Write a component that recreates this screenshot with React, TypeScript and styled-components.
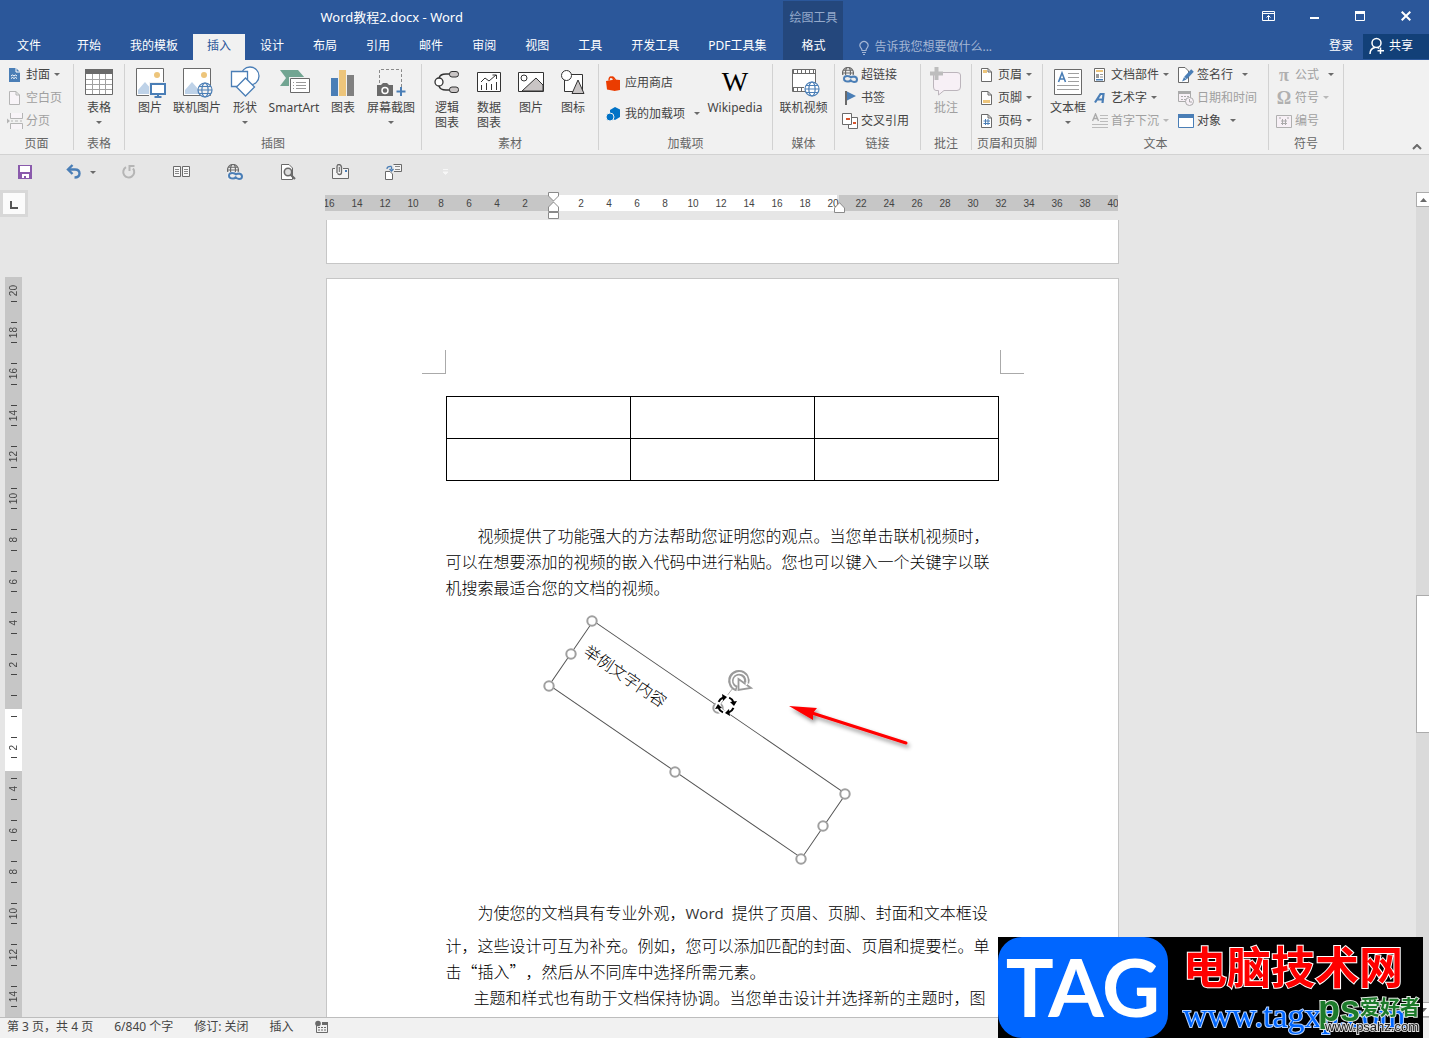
import React from 'react';
import styled, { createGlobalStyle, css } from 'styled-components';

const ui = '"Noto Sans", "Noto Sans CJK SC", sans-serif';
const cjk = '"Noto Sans CJK SC", "Noto Sans", sans-serif';
const BLUE = '#2b579a';
const ACCENT = '#4a7eb6';
const INK = '#6a6a6a';
const LINE = '#d2d2d2';

const GlobalStyle = createGlobalStyle`
  *, *::before, *::after { box-sizing: border-box; }
  body { margin: 0; font-family: ${ui}; font-size: 12px; color: #444; background: #e6e6e6; }
  button, input { font: inherit; color: inherit; background: none; border: 0; padding: 0; margin: 0; }
  svg { display: block; flex: none; }
`;

const Shell = styled.div`
  height: 100vh;
  display: flex;
  flex-direction: column;
  overflow: hidden;
`;

/* ---------- header ---------- */
const Header = styled.header`
  flex: none;
  display: flex;
  height: 60px;
  background: ${BLUE};
  color: #fff;
`;
const HeaderMain = styled.div`
  display: flex;
  flex-direction: column;
`;
const Title = styled.h1`
  margin: 0;
  height: 34px;
  font-size: 13px;
  line-height: 34px;
  font-weight: 400;
  text-align: center;
`;
const Tabs = styled.nav`
  display: flex;
  gap: 1px;
  padding: 0 3px 0 0;
`;
const Tab = styled.button<{ $active?: boolean }>`
  height: 26px;
  padding: 0 14px 2px;
  line-height: 22px;
  white-space: nowrap;
  &:first-child { padding: 0 17px 2px; margin-right: 4px; }
  ${p => p.$active && css`
    background: #f1f1f1;
    color: ${BLUE};
  `}
`;
const ContextGroup = styled.div`
  width: 60px;
  margin-top: 1px;
  background: #24477c;
  display: flex;
  flex-direction: column;
  align-items: center;
`;
const ContextName = styled.span`
  line-height: 33px;
  color: #94a9cb;
`;
const HeaderSide = styled.div`
  flex: 1;
  display: flex;
  flex-direction: column;
`;
const WindowControls = styled.div`
  display: flex;
  justify-content: flex-end;
  height: 34px;
  padding-bottom: 2px;
`;
const WindowButton = styled.button`
  width: 46px;
  display: grid;
  place-items: center;
`;
const SideRow = styled.div`
  display: flex;
  align-items: stretch;
  height: 26px;
  padding-left: 15px;
`;
const TellMe = styled.label`
  flex: 1;
  display: flex;
  align-items: center;
  gap: 4px;
  color: #a4b6d4;
`;
const TellInput = styled.input`
  flex: 1;
  min-width: 0;
  outline: none;
  line-height: 18px;
  &::placeholder { color: #a4b6d4; opacity: 1; }
`;
const SignIn = styled.button`
  padding: 0 10px 2px;
  line-height: 22px;
`;
const Share = styled.button`
  width: 66px;
  height: 25px;
  padding: 0 0 2px 6px;
  background: #124078;
  display: flex;
  align-items: center;
  gap: 4px;
  line-height: 20px;
`;

/* ---------- ribbon ---------- */
const Ribbon = styled.section`
  flex: none;
  display: flex;
  height: 95px;
  padding: 4px 0;
  background: #f1f1f1;
  border-bottom: 1px solid ${LINE};
`;
const Group = styled.div<{ $w: number }>`
  flex: none;
  width: ${p => p.$w}px;
  border-right: 1px solid ${LINE};
  display: flex;
  flex-direction: column;
`;
const GroupBody = styled.div<{ $pad?: number; $center?: boolean }>`
  flex: none;
  height: 71px;
  display: flex;
  padding-left: ${p => p.$pad ?? 0}px;
  justify-content: ${p => (p.$center ? 'center' : 'flex-start')};
`;
const GroupName = styled.div`
  text-align: center;
  line-height: 18px;
  color: #666;
  white-space: nowrap;
`;
const BigButton = styled.button<{ $w: number; $off?: boolean }>`
  width: ${p => p.$w}px;
  display: flex;
  flex-direction: column;
  align-items: center;
  justify-content: flex-start;
  line-height: 15px;
  white-space: pre;
  color: ${p => (p.$off ? '#a0a0a0' : '#444')};
`;
const BigIcon = styled.span`
  height: 36px;
  display: grid;
  place-items: center;
`;
const Caret = styled.i<{ $gap?: number; $off?: boolean }>`
  width: 0;
  height: 0;
  margin-left: ${p => p.$gap ?? 0}px;
  border: 3px solid transparent;
  border-top-color: ${p => (p.$off ? '#b8b8b8' : '#6a6a6a')};
  border-bottom: 0;
`;
const BigCaret = styled(Caret)`
  margin-top: 6px;
`;
const Stack = styled.div<{ $w?: number; $loose?: boolean }>`
  display: flex;
  flex-direction: column;
  width: ${p => (p.$w ? `${p.$w}px` : 'auto')};
  padding-top: ${p => (p.$loose ? 8 : 0)}px;
  gap: ${p => (p.$loose ? 10 : 2)}px;
`;
const SmallButton = styled.button<{ $off?: boolean }>`
  height: 21px;
  display: flex;
  align-items: center;
  white-space: nowrap;
  color: ${p => (p.$off ? '#a0a0a0' : '#444')};
`;
const SmallLabel = styled.span`
  margin-left: 3px;
  line-height: 18px;
`;
const Collapse = styled.button`
  margin-left: auto;
  align-self: flex-end;
  padding: 0 7px 0 0;
`;

/* ---------- quick access ---------- */
const QuickBar = styled.div`
  flex: none;
  display: flex;
  height: 35px;
`;
const QuickButton = styled.button<{ $w?: number; $menu?: boolean }>`
  width: ${p => p.$w ?? 53}px;
  display: flex;
  align-items: center;
  justify-content: ${p => (p.$menu ? 'flex-end' : 'center')};
  padding: 0 ${p => (p.$menu ? 6 : 0)}px 1px 0;
`;

/* ---------- workspace ---------- */
const Workspace = styled.div`
  flex: 1;
  min-height: 0;
  display: flex;
`;
const LeftRail = styled.div`
  width: 28px;
  display: flex;
  flex-direction: column;
`;
const TabStop = styled.button`
  height: 27px;
  border: 3px solid #d8d8d8;
  background: #fbfbfb;
  display: grid;
  place-items: center;
`;
const VRuler = styled.div`
  flex: 1;
  min-height: 0;
  width: 17px;
  margin: 60px 0 0 5px;
  overflow: hidden;
  display: flex;
  flex-direction: column;
  justify-content: flex-end;
  background: linear-gradient(#c6c6c6 432px, #fff 432px 494px, #c6c6c6 494px);
`;
const VCell = styled.div`
  flex: none;
  height: 41px;
  padding: 10px 0;
  display: flex;
  flex-direction: column;
  align-items: center;
  justify-content: space-between;
  &:nth-child(odd) { height: 42px; }
  &::before, &::after { content: ''; width: 6px; height: 1px; background: #444; }
  &:first-child::before { background: none; }
`;
const VNumber = styled.span`
  writing-mode: vertical-rl;
  transform: rotate(180deg);
  font: 10px/12px "Liberation Sans", sans-serif;
`;
const Canvas = styled.main`
  flex: 1;
  min-width: 0;
  display: flex;
  flex-direction: column;
  align-items: center;
`;
const HRuler = styled.div`
  position: relative;
  flex: none;
  width: 793px;
  height: 30px;
  padding-top: 5px;
`;
const HTrack = styled.div`
  height: 16px;
  margin: 0 1px 0 -1px;
  overflow: hidden;
  display: flex;
  justify-content: center;
  background: linear-gradient(to right, #c6c6c6 229px, #fff 229px 512px, #e0e0e0 512px 514px, #c6c6c6 514px);
  font: 10px/18px "Liberation Sans", sans-serif;
`;
const HCell = styled.span`
  flex: none;
  width: 28px;
  text-align: center;
`;
const Marker = styled.svg<{ $x: number; $y: number }>`
  position: absolute;
  left: ${p => p.$x}px;
  top: ${p => p.$y}px;
`;
const Pages = styled.div`
  flex: 1;
  min-height: 0;
  width: 793px;
  overflow: hidden;
`;
const PageEnd = styled.div`
  height: 44px;
  background: #fff;
  border: 1px solid #c6c6c6;
  border-top: 0;
  margin-bottom: 14px;
`;
const Page = styled.article`
  background: #fff;
  border: 1px solid #c6c6c6;
  padding: 71px 119px 40px;
  color: #000;
`;
const Crops = styled.div`
  display: flex;
  justify-content: space-between;
  margin: 0 -25px 22px -24px;
`;
const Crop = styled.i<{ $side: 'left' | 'right' }>`
  width: 24px;
  height: 24px;
  border-bottom: 1px solid #aaa;
  border-${p => (p.$side === 'left' ? 'right' : 'left')}: 1px solid #aaa;
`;
const DocTable = styled.table`
  width: 100%;
  table-layout: fixed;
  border-collapse: collapse;
  margin-bottom: 41px;
  td { height: 42px; border: 1px solid #000; padding: 0; }
`;
const Para = styled.p`
  margin: 0;
  font: 300 16px/26px ${cjk};
  white-space: pre;
  text-spacing-trim: space-all;
`;
const TextLine = styled.span<{ $indent?: number; $tall?: boolean }>`
  display: block;
  padding-left: ${p => p.$indent ?? 0}px;
  line-height: ${p => (p.$tall ? 40 : 26)}px;
`;
const Latin = styled.span`
  margin-right: 8px;
  font: 15px/20px "Open Sans", sans-serif;
  color: #333;
`;
const Figure = styled.figure`
  position: relative;
  height: 292px;
  margin: 0;
`;
const TextBox = styled.div`
  position: absolute;
  left: 98px;
  top: 100px;
  width: 307px;
  height: 79px;
  padding: 14px 9px;
  border: 1px solid #555;
  transform: rotate(34.4deg);
  font: 300 16px/24px ${cjk};
`;
const Overlay = styled.svg`
  position: absolute;
  left: 0;
  top: 0;
`;

/* ---------- scroll bar ---------- */
const ScrollBar = styled.div`
  width: 13px;
  margin-top: 2px;
  display: flex;
  flex-direction: column;
  background: #dadada;
`;
const ScrollButton = styled.button`
  height: 15px;
  background: #fff;
  border: 1px solid #ababab;
  border-right: 0;
  display: grid;
  place-items: center end;
  padding-right: 2px;
`;
const ScrollGap = styled.div<{ $grow: number }>`
  flex: ${p => p.$grow} 1 0;
`;
const Thumb = styled.div`
  flex: 137 1 0;
  background: #fff;
  border: 1px solid #ababab;
  border-right: 0;
`;

/* ---------- status ---------- */
const Status = styled.footer`
  flex: none;
  height: 21px;
  display: flex;
  align-items: center;
  gap: 21px;
  padding: 0 0 2px 7px;
  border-top: 1px solid #bdbdbd;
  background: #f1f1f1;
  line-height: 18px;
  color: #444;
`;

/* ---------- site banner ---------- */
const Banner = styled.aside`
  position: fixed;
  right: 6px;
  bottom: 0;
  width: 425px;
  height: 101px;
  display: flex;
  background: #000;
`;
const Tag = styled.strong`
  width: 170px;
  border-radius: 24px;
  background: #0066ff;
  color: #fff;
  font: 700 80px/98px Lato, "Open Sans", sans-serif;
  text-align: center;
`;
const BannerText = styled.div`
  flex: 1;
  padding-left: 15px;
  white-space: nowrap;
`;
const BannerName = styled.div`
  font: 700 44px/56px ${cjk};
  color: #f00;
  -webkit-text-stroke: 2px #fff;
  paint-order: stroke fill;
`;
const BannerUrl = styled.div`
  font: 34px/46px "Liberation Serif", serif;
  color: #0066ff;
  -webkit-text-stroke: 2px #b5d3ff;
  paint-order: stroke fill;
`;
const Stamp = styled.div`
  position: absolute;
  right: 4px;
  bottom: 4px;
  width: 101px;
  height: 36px;
  white-space: nowrap;
`;
const StampName = styled.div`
  display: flex;
  align-items: flex-start;
  color: #1c7a2a;
  -webkit-text-stroke: 2px #dfe8df;
  paint-order: stroke fill;
  font: 700 20px/18px ${cjk};
`;
const StampPs = styled.span`
  font: 700 36px/22px "Liberation Sans", sans-serif;
`;
const StampUrl = styled.div`
  position: absolute;
  right: 0;
  bottom: 0;
  font: 13px/14px "Liberation Sans", sans-serif;
  color: #222;
  -webkit-text-stroke: 2px #ddd;
  paint-order: stroke fill;
`;

/* ---------- icons ---------- */
type IconProps = { w?: number; h?: number; children: React.ReactNode };
const Ico = ({ w = 16, h = 16, children }: IconProps) => (
  <svg width={w} height={h} viewBox={`0 0 ${w} ${h}`} fill="none" aria-hidden="true">{children}</svg>
);
const Globe = ({ x, y, r, c = ACCENT, bg = '#f1f1f1' }: { x: number; y: number; r: number; c?: string; bg?: string }) => (
  <g transform={`translate(${x} ${y})`} stroke={c} strokeWidth="1.2">
    <circle r={r} fill={bg} />
    <ellipse rx={r * 0.45} ry={r} />
    <path d={`M${-r} 0H${r}M${-r * 0.85} ${-r / 2}H${r * 0.85}M${-r * 0.85} ${r / 2}H${r * 0.85}`} />
  </g>
);
const HyperIcon = () => (
  <Ico>
    <Globe x={6} y={6} r={5.5} c={INK} />
    <path d="M0 8H16V16H0Z" fill="#ececec" />
    <path d="M9 13.500Q8 14.500 6 14.500Q2 14.500 2 11.700T5.500 9Q8 9 9.500 11M8 12.500Q9.500 15 12 15Q15 15 15 12.500T12 9.500Q10 9.500 9 10.500" stroke={ACCENT} strokeWidth="2" />
  </Ico>
);
const Cover = () => (
  <Ico><path d="M2 1H9L13 5V15H2Z" fill={ACCENT} /><path d="M9 1V5H13" stroke="#fff" /><path d="M4 9l1.500-1 1.500 1 1.500-1 1.500 1M4 11.500l1.500-1 1.500 1 1.500-1 1.500 1" stroke="#fff" /></Ico>
);
const Blank = () => (
  <Ico><path d="M2.500 1.500H9L12.500 5V14.500H2.500ZM9 1.500V5H12.500" stroke="#b5b5b5" fill="#f8f4f8" /></Ico>
);
const Break = () => (
  <Ico><path d="M3.500 0V5.500H15.500V0M3.500 16V10.500H15.500V16" stroke="#b5b5b5" fill="#f8f4f8" /><path d="M0 5.500L3 8L0 10.500ZM4 7.500H6V8.500H4ZM8 7.500H11V8.500H8ZM13 7.500H15V8.500H13Z" fill="#b5b5b5" /></Ico>
);
const TableIcon = () => (
  <Ico w={28} h={26}><path d="M.5.500H27.500V25.500H.5Z" fill="#fff" stroke={INK} /><path d="M0 0H28V5H0Z" fill={INK} /><path d="M1 10.500H27M1 15.500H27M1 20.500H27M7.500 5V25M14.500 5V25M20.500 5V25" stroke="#a0a0a0" /></Ico>
);
const Photo = ({ online }: { online?: boolean }) => (
  <Ico w={32} h={32}>
    <path d="M2.500 2.500H29.500V29.500H2.500Z" fill="#fff" stroke={INK} />
    <circle cx="23" cy="9" r="3" fill="#edc57b" />
    <path d="M4 28V24L11 16L18 24V28Z" fill="#bed2e8" />
    {online ? <Globe x={24} y={24} r={7} /> : (
      <><path d="M15 16H32V30H15Z" fill="#f1f1f1" /><path d="M17 18H31V28H17Z" fill="#fff" stroke={ACCENT} strokeWidth="2" /><path d="M24 28V31M20.500 31H27.500" stroke={ACCENT} strokeWidth="2" /></>
    )}
  </Ico>
);
const Shapes = () => (
  <Ico w={32} h={32}><g stroke={ACCENT} strokeWidth="1.300" fill="#fff"><circle cx="21" cy="10" r="9" /><path d="M2.500 5.500H18.500V20.500H2.500Z" /><path d="M16.500 12L25.500 21L16.500 30L7.500 21Z" /></g></Ico>
);
const SmartArt = () => (
  <Ico w={32} h={32}><path d="M2 4H20L27 12L21 20H2L8 12Z" fill="#72a592" /><path d="M11 11H32V28H11Z" fill="#f1f1f1" /><path d="M12.500 12.500H31.500V26.500H12.500Z" fill="#fff" stroke={INK} /><path d="M18 16.500H28M18 19.500H28M18 22.500H28M15 16.500H16M15 19.500H16M15 22.500H16" stroke="#999" /></Ico>
);
const Chart = () => (
  <Ico w={26} h={28}><path d="M1 10H8V28H1Z" fill={ACCENT} /><path d="M9 2H16V28H9Z" fill="#edc57b" /><path d="M17 7H24V28H17Z" fill="#808080" /></Ico>
);
const Screenshot = () => (
  <Ico w={32} h={30}><path d="M4.500 16V2.500H26.500V20" stroke="#8a8a8a" strokeDasharray="3 2" /><path d="M2 18H6L8 16H12L14 18H18V29H2Z" fill={INK} /><circle cx="10" cy="23.500" r="3" stroke="#fff" strokeWidth="1.500" /><path d="M26 20V29M21.500 24.500H30.500" stroke={ACCENT} strokeWidth="2" /></Ico>
);
const Logic = () => (
  <Ico w={28} h={26}><path d="M17 5H13Q7 5 6 9M17 21H13Q7 21 6 17" stroke="#333" strokeWidth="1.300" /><circle cx="6" cy="13" r="4" fill="#fff" stroke="#333" strokeWidth="1.300" /><rect x="16.500" y="2.500" width="9" height="5.500" rx="2.500" fill="#c9c5c5" stroke="#333" /><rect x="16.500" y="18" width="9" height="5.500" rx="2.500" fill="#c9c5c5" stroke="#333" /></Ico>
);
const DataChart = () => (
  <Ico w={26} h={24}><path d="M1.500 2.500H24.500V21.500H1.500Z" fill="#fff" stroke="#333" /><path d="M5.500 20V15M10.500 20V13M15.500 20V14M20.500 20V12M5 12L9 8L13 11L20 5M16.500 5H20.500V9" stroke="#333" /></Ico>
);
const Landscape = () => (
  <Ico w={28} h={24}><path d="M1.500 2.500H26.500V21.500H1.500Z" stroke="#333" fill="#fff" /><path d="M5 21L19 8L26 15V21Z" fill="#c9c5c5" stroke="#333" /><circle cx="7" cy="8" r="3" fill="#fff" stroke="#333" /></Ico>
);
const Glyphs = () => (
  <Ico w={26} h={26}><path d="M4.500 5.500H22.500V22.500H4.500Z" fill="#fff" stroke="#333" /><circle cx="6.500" cy="6.500" r="5" fill="#fff" stroke="#333" /><path d="M18 11L24 24.500H12Z" fill="#c9c5c5" stroke="#333" /></Ico>
);
const Store = () => (
  <Ico><path d="M0 6L9 4.500V16L1 14.500ZM8.500 4.500L14 5V15L8.500 16Z" fill="#eb3c00" /><path d="M3 5.500Q3 2 5 2T7.500 5M5 3Q7 0 9.500 5" stroke="#eb3c00" strokeWidth="1.300" /></Ico>
);
const AddIn = () => (
  <Ico><path d="M9 1L14 3.500V11L9 14L4 12V4Z" fill="#0072c6" /><circle cx="4" cy="11" r="4" fill="#0072c6" stroke="#f1f1f1" /></Ico>
);
const Wiki = styled.span`
  font: 28px/28px "Liberation Serif", serif;
  color: #000;
`;
const Video = () => (
  <Ico w={32} h={30}><path d="M4.500 2.500H27.500V24.500H4.500Z" fill="#fff" stroke={INK} /><path d="M5 4.500H27M5 22.500H16" stroke={INK} strokeWidth="3" strokeDasharray="1 3" /><path d="M5 6.500H27M5 20.500H16" stroke={INK} /><Globe x={24} y={22} r={7} bg="#fff" /></Ico>
);
const Flag = () => (
  <Ico><path d="M4 1V15" stroke={INK} strokeWidth="2" /><path d="M5 1.500L14 6L5 10.500Z" fill={ACCENT} /></Ico>
);
const CrossRef = () => (
  <Ico><path d="M6.500 4.500H15.500V15.500H6.500Z" fill="#fff" stroke={INK} /><path d="M.5.500H9.500V11.500H.5Z" fill="#fff" stroke={INK} /><path d="M4 5H8V7H4ZM11 9H14V11H11Z" fill="#d8532b" /></Ico>
);
const Comment = () => (
  <Ico w={32} h={30}><path d="M5 5.500H27Q30.500 5.500 30.500 8V20Q30.500 23.500 27 23.500H14L8.500 28V23.500H6Q3.500 23.500 3.500 20V8Z" fill="#f7f0f6" stroke="#bcb5bc" /><path d="M6.500 0V13M0 6.500H13" stroke="#bdbdbd" strokeWidth="4" /></Ico>
);
const SheetIcon = ({ part }: { part: 'top' | 'bottom' | 'hash' }) => (
  <Ico><path d="M2.500 1.500H9L12.500 5V14.500H2.500ZM9 1.500V5H12.500" stroke={INK} fill="#fff" />
    {part === 'top' && <path d="M4 3H8V6H4Z" fill="#edc57b" />}
    {part === 'bottom' && <path d="M4 10H11V13H4Z" fill="#edc57b" />}
    {part === 'hash' && <path d="M6.500 6V12M9 6V12M4.500 8H11M4.500 10.500H11" stroke={ACCENT} />}
  </Ico>
);
const TextBoxIcon = () => (
  <Ico w={28} h={26}><path d="M.5.500H27.500V25.500H.5Z" fill="#fff" stroke={INK} /><path d="M14 4.500H25M14 8.500H25M14 12.500H25M3 16.500H25M3 20.500H25" stroke="#a0a0a0" /><path d="M4.500 13L8 4L11.500 13M5.500 10H10.500" stroke={ACCENT} strokeWidth="1.600" /></Ico>
);
const Parts = () => (
  <Ico><path d="M2.500 1.500H12.500V14.500H2.500Z" fill="#fff" stroke={INK} /><path d="M4 3H11V5H4Z" fill="#edc57b" /><path d="M4 7H7V11H4Z" fill="#999" /><path d="M8 7.500H11M8 10H11" stroke="#999" /><path d="M4 12H11V13.500H4Z" fill={ACCENT} /></Ico>
);
const ArtText = () => (
  <Ico><path d="M3 12.500L8.500 4H11.500L10.500 13M5.500 9.500H10.500" stroke={ACCENT} strokeWidth="2.200" /></Ico>
);
const DropCap = () => (
  <Ico><path d="M.5 8L3.500 1L6.500 8M1.500 5.500H5.500" stroke="#aaa" strokeWidth="1.400" /><path d="M8 2.500H16M8 5.500H16M8 8.500H16M0 11.500H16M0 14.500H16" stroke="#bbb" /></Ico>
);
const Sign = () => (
  <Ico><path d="M.5.500H7L10.500 4V15.500H.5Z" fill="#fff" stroke={INK} /><path d="M14.500 3.500L7.500 11" stroke={ACCENT} strokeWidth="3.500" /><path d="M4 14.500L6 10L8.500 12.500Z" fill={ACCENT} /></Ico>
);
const DateIcon = () => (
  <Ico><path d="M.5 1.500H12.500V11.500H.5Z" fill="#f7f0f6" stroke="#aaa" /><path d="M0 1H13V4H0Z" fill="#aaa" /><path d="M3 6.500H11M3 9.500H8" stroke="#aaa" strokeDasharray="2 1" /><circle cx="11.500" cy="11.500" r="4" fill="#f7f0f6" stroke="#aaa" /><path d="M11.500 9V12H14" stroke="#aaa" /></Ico>
);
const ObjectIcon = () => (
  <Ico><path d="M.5 1.500H15.500V14.500H.5Z" fill="#fff" stroke={ACCENT} /><path d="M0 1H16V5H0Z" fill={ACCENT} /></Ico>
);
const Sym = styled.span`
  width: 16px;
  font: 700 18px/16px "Liberation Serif", serif;
  color: #b0b0b0;
`;
const NumberIcon = () => (
  <Ico><path d="M.5 2.500H15.500V14.500H.5Z" fill="#f7f0f6" stroke="#b0b0b0" /><path d="M3 5H5M11 5H13M6.500 6V12M9.500 6V12M5 8H11M5 10.500H11" stroke="#aaa" /></Ico>
);
const Save = () => (
  <Ico><path d="M1 1H15V15H1Z" fill="#8a5aac" /><path d="M3 2H13V8H3ZM5 10H12V14H9V12H7V14H5Z" fill="#fff" /></Ico>
);
const Undo = () => (
  <Ico><path d="M2 5.500H9Q13.500 5.500 13.500 9.500Q13.500 13.500 8.500 13.500" stroke={ACCENT} strokeWidth="2.400" /><path d="M6.500 1L2 5.500L6.500 10" stroke={ACCENT} strokeWidth="2.400" /></Ico>
);
const Redo = () => (
  <Ico><path d="M5 3.200A5.500 5.500 0 1 0 12 4.500" stroke="#b5b5b5" strokeWidth="2" /><path d="M13.500 2H8.500V7" stroke="#b5b5b5" strokeWidth="2" /></Ico>
);
const Columns = () => (
  <Ico w={17} h={14}><path d="M.5 1.500H7.500V11.500H.5ZM9.500 1.500H16.500V11.500H9.500Z" fill="#f8f8f8" stroke={INK} /><path d="M2 4.500H6M2 6.500H6M2 8.500H6M11 4.500H15M11 6.500H15M11 8.500H15" stroke="#888" /></Ico>
);
const Preview = () => (
  <Ico><path d="M1.500.500H9L12.500 4V15.500H1.500Z" fill="#fff" stroke={INK} /><circle cx="8" cy="8" r="3.700" fill="#ddd" stroke={INK} strokeWidth="1.600" /><path d="M10.500 10.500L15 15" stroke={INK} strokeWidth="2.200" /></Ico>
);
const Mail = () => (
  <Ico w={17}><path d="M3 4.500H.5V14.500H16.500V4.500H11" fill="#f4f4f4" stroke={INK} /><path d="M5 9V3Q5 .5 7 .5T9.500 3V8.500Q9.500 10.500 7.500 10.500T6 9" stroke={INK} strokeWidth="1.300" /><path d="M7.300 3V8" stroke={INK} /><path d="M13 6H15V8H13Z" fill={ACCENT} /></Ico>
);
const Swap = () => (
  <Ico w={17}><path d="M.5 7.500H5L7.500 10V15.500H.5Z" fill="#fff" stroke={INK} /><path d="M8.500.500H16.500V7.500H9" stroke={INK} fill="#f4f4f4" /><path d="M10 2.500H15M10 5.500H15" stroke="#888" /><path d="M2 5Q2 2 6.500 2.500M6.500 2.500V5.500M4.500 5L6.500 7L8.500 5" stroke={ACCENT} strokeWidth="1.300" /></Ico>
);
const More = () => (
  <Ico w={7} h={8}><path d="M1 1.500H6M1 4H6L3.500 6.500Z" fill="#f7f7f7" stroke="#f7f7f7" /></Ico>
);

const Small = ({ icon, label, gap, off, live }: { icon: React.ReactNode; label: string; gap?: number; off?: boolean; live?: boolean }) => (
  <SmallButton $off={off}>
    {icon}<SmallLabel>{label}</SmallLabel>{gap !== undefined && <Caret $gap={gap} $off={off && !live} />}
  </SmallButton>
);
const Big = ({ icon, label, w, caret, off }: { icon: React.ReactNode; label: string; w: number; caret?: boolean; off?: boolean }) => (
  <BigButton $w={w} $off={off}><BigIcon>{icon}</BigIcon>{label}{caret && <BigCaret />}</BigButton>
);

const tabs = ['文件', '开始', '我的模板', '插入', '设计', '布局', '引用', '邮件', '审阅', '视图', '工具', '开发工具', 'PDF工具集'];
const hMarks = [16, 14, 12, 10, 8, 6, 4, 2, 0, 2, 4, 6, 8, 10, 12, 14, 16, 18, 20, 22, 24, 26, 28, 30, 32, 34, 36, 38, 40];
const vMarks = [20, 18, 16, 14, 12, 10, 8, 6, 4, 2, 0, 2, 4, 6, 8, 10, 12, 14];
const handles = [[146, 21], [125, 54], [103, 86], [272, 108], [229, 172], [399, 194], [377, 226], [355, 259]];

export default function App() {
  return (
    <Shell lang="zh-CN">
      <GlobalStyle />
      <Header>
        <HeaderMain>
          <Title>Word教程2.docx - Word</Title>
          <Tabs>{tabs.map(t => <Tab key={t} $active={t === '插入'}>{t}</Tab>)}</Tabs>
        </HeaderMain>
        <ContextGroup>
          <ContextName>绘图工具</ContextName>
          <Tab>格式</Tab>
        </ContextGroup>
        <HeaderSide>
          <WindowControls>
            <WindowButton aria-label="功能区显示选项"><Ico w={13} h={10}><path d="M.5.500H12.500V9.500H.5ZM.5 2.500H12.500M6.500 9V4.500M4.500 6.500L6.500 4.500L8.500 6.500" stroke="#fff" /></Ico></WindowButton>
            <WindowButton aria-label="最小化"><Ico w={9} h={6}><path d="M0 5H9" stroke="#fff" strokeWidth="2" /></Ico></WindowButton>
            <WindowButton aria-label="最大化"><Ico w={10} h={10}><path d="M.5.500H9.500V9.500H.5Z" stroke="#fff" /><path d="M0 0H10V3H0Z" fill="#fff" /></Ico></WindowButton>
            <WindowButton aria-label="关闭"><Ico w={10} h={10}><path d="M.7.700L9.300 9.300M9.300.700L.7 9.300" stroke="#fff" strokeWidth="2" /></Ico></WindowButton>
          </WindowControls>
          <SideRow>
            <TellMe>
              <Ico w={12} h={15}><path d="M4 10.500Q4 9 2.700 7.700A4 4 0 1 1 9.300 7.700Q8 9 8 10.500ZM4 12.500H8M5 14.500H7" stroke="#a4b6d4" strokeWidth="1.200" /></Ico>
              <TellInput aria-label="告诉我" placeholder="告诉我您想要做什么..." />
            </TellMe>
            <SignIn>登录</SignIn>
            <Share>
              <Ico w={16} h={18}><circle cx="7.500" cy="6" r="4.500" stroke="#fff" strokeWidth="1.500" /><path d="M1 17Q1 11.500 6 10.500M8.500 10.500L10 11.500M11.500 10.500V17M8.500 13.800H15" stroke="#fff" strokeWidth="1.500" /></Ico>
              共享
            </Share>
          </SideRow>
        </HeaderSide>
      </Header>

      <Ribbon>
        <Group $w={74}>
          <GroupBody $pad={7}>
            <Stack>
              <Small icon={<Cover />} label="封面" gap={4} />
              <Small icon={<Blank />} label="空白页" off />
              <Small icon={<Break />} label="分页" off />
            </Stack>
          </GroupBody>
          <GroupName>页面</GroupName>
        </Group>
        <Group $w={51}>
          <GroupBody $center><Big w={50} icon={<TableIcon />} label="表格" caret /></GroupBody>
          <GroupName>表格</GroupName>
        </Group>
        <Group $w={297}>
          <GroupBody $pad={3}>
            <Big w={44} icon={<Photo />} label="图片" />
            <Big w={50} icon={<Photo online />} label="联机图片" />
            <Big w={46} icon={<Shapes />} label="形状" caret />
            <Big w={52} icon={<SmartArt />} label="SmartArt" />
            <Big w={46} icon={<Chart />} label="图表" />
            <Big w={50} icon={<Screenshot />} label="屏幕截图" caret />
          </GroupBody>
          <GroupName>插图</GroupName>
        </Group>
        <Group $w={177}>
          <GroupBody $pad={4}>
            <Big w={42} icon={<Logic />} label={'逻辑\n图表'} />
            <Big w={42} icon={<DataChart />} label={'数据\n图表'} />
            <Big w={42} icon={<Landscape />} label="图片" />
            <Big w={42} icon={<Glyphs />} label="图标" />
          </GroupBody>
          <GroupName>素材</GroupName>
        </Group>
        <Group $w={174}>
          <GroupBody $pad={7}>
            <Stack $loose $w={98}>
              <Small icon={<Store />} label="应用商店" />
              <Small icon={<AddIn />} label="我的加载项" gap={9} />
            </Stack>
            <Big w={62} icon={<Wiki>W</Wiki>} label="Wikipedia" />
          </GroupBody>
          <GroupName>加载项</GroupName>
        </Group>
        <Group $w={62}>
          <GroupBody $center><Big w={60} icon={<Video />} label="联机视频" /></GroupBody>
          <GroupName>媒体</GroupName>
        </Group>
        <Group $w={86}>
          <GroupBody $pad={7}>
            <Stack>
              <Small icon={<HyperIcon />} label="超链接" />
              <Small icon={<Flag />} label="书签" />
              <Small icon={<CrossRef />} label="交叉引用" />
            </Stack>
          </GroupBody>
          <GroupName>链接</GroupName>
        </Group>
        <Group $w={51}>
          <GroupBody $center><Big w={50} icon={<Comment />} label="批注" off /></GroupBody>
          <GroupName>批注</GroupName>
        </Group>
        <Group $w={71}>
          <GroupBody $pad={7}>
            <Stack>
              <Small icon={<SheetIcon part="top" />} label="页眉" gap={4} />
              <Small icon={<SheetIcon part="bottom" />} label="页脚" gap={4} />
              <Small icon={<SheetIcon part="hash" />} label="页码" gap={4} />
            </Stack>
          </GroupBody>
          <GroupName>页眉和页脚</GroupName>
        </Group>
        <Group $w={226}>
          <GroupBody $pad={1}>
            <Big w={48} icon={<TextBoxIcon />} label="文本框" caret />
            <Stack $w={86}>
              <Small icon={<Parts />} label="文档部件" gap={4} />
              <Small icon={<ArtText />} label="艺术字" gap={4} />
              <Small icon={<DropCap />} label="首字下沉" gap={4} off />
            </Stack>
            <Stack>
              <Small icon={<Sign />} label="签名行" gap={9} />
              <Small icon={<DateIcon />} label="日期和时间" off />
              <Small icon={<ObjectIcon />} label="对象" gap={9} />
            </Stack>
          </GroupBody>
          <GroupName>文本</GroupName>
        </Group>
        <Group $w={75}>
          <GroupBody $pad={7}>
            <Stack>
              <Small icon={<Sym>π</Sym>} label="公式" gap={9} off live />
              <Small icon={<Sym>Ω</Sym>} label="符号" gap={4} off />
              <Small icon={<NumberIcon />} label="编号" off />
            </Stack>
          </GroupBody>
          <GroupName>符号</GroupName>
        </Group>
        <Collapse aria-label="折叠功能区"><Ico w={10} h={6}><path d="M1 5L5 1L9 5" stroke={INK} strokeWidth="2" /></Ico></Collapse>
      </Ribbon>

      <QuickBar>
        <QuickButton $w={50} aria-label="保存"><Save /></QuickButton>
        <QuickButton $w={52} $menu aria-label="撤消"><Undo /><Caret $gap={8} /></QuickButton>
        <QuickButton aria-label="重复"><Redo /></QuickButton>
        <QuickButton aria-label="双页"><Columns /></QuickButton>
        <QuickButton aria-label="超链接"><HyperIcon /></QuickButton>
        <QuickButton aria-label="打印预览"><Preview /></QuickButton>
        <QuickButton aria-label="电子邮件"><Mail /></QuickButton>
        <QuickButton aria-label="切换"><Swap /></QuickButton>
        <QuickButton $w={50} aria-label="自定义"><More /></QuickButton>
      </QuickBar>

      <Workspace>
        <LeftRail>
          <TabStop aria-label="制表位"><Ico w={10} h={12}><path d="M2 3V10H9" stroke="#555" strokeWidth="2" /></Ico></TabStop>
          <VRuler>
            {vMarks.map((n, i) => <VCell key={i}>{n > 0 && <VNumber>{n}</VNumber>}</VCell>)}
          </VRuler>
        </LeftRail>
        <Canvas>
          <HRuler>
            <HTrack>{hMarks.map((n, i) => <HCell key={i}>{n > 0 ? n : ''}</HCell>)}</HTrack>
            <Marker $x={222} $y={2} width="11" height="28" viewBox="0 0 11 28" fill="#fff" stroke="#8a8a8a">
              <path d="M.5.500H10.500V4L5.500 9L.5 4ZM5.500 10L10.500 15V19.500H.5V15ZM.5 20.500H10.500V26.500H.5Z" />
            </Marker>
            <Marker $x={508} $y={12} width="11" height="12" viewBox="0 0 11 12" fill="#fff" stroke="#8a8a8a">
              <path d="M5.500 .7L10.500 6V10.500H.5V6Z" />
            </Marker>
          </HRuler>
          <Pages>
            <PageEnd />
            <Page>
              <Crops><Crop $side="left" /><Crop $side="right" /></Crops>
              <DocTable>
                <tbody>
                  <tr><td /><td /><td /></tr>
                  <tr><td /><td /><td /></tr>
                </tbody>
              </DocTable>
              <Para>
                <TextLine $indent={32}>视频提供了功能强大的方法帮助您证明您的观点。当您单击联机视频时，</TextLine>
                <TextLine>可以在想要添加的视频的嵌入代码中进行粘贴。您也可以键入一个关键字以联</TextLine>
                <TextLine>机搜索最适合您的文档的视频。</TextLine>
              </Para>
              <Figure>
                <TextBox>举例文字内容</TextBox>
                <Overlay width="553" height="292" viewBox="0 0 553 292" fill="none">
                  <defs>
                    <filter id="soft" x="-20%" y="-20%" width="150%" height="160%">
                      <feDropShadow dx="2" dy="3" stdDeviation="2" floodColor="#000" floodOpacity="0.450" />
                    </filter>
                  </defs>
                  <path d="M273 106L287 88" stroke="#aaa" />
                  {handles.map(([x, y]) => <circle key={x} cx={x} cy={y} r="4.700" fill="#fff" stroke="#a0a0a0" strokeWidth="2" />)}
                  <path d="M291 88.500A8 8 0 1 1 300.500 83" stroke="#9a9a9a" strokeWidth="5.500" />
                  <path d="M292.500 79L292.500 90L305 88Z" fill="#fff" stroke="#9a9a9a" strokeWidth="1.800" />
                  <path d="M289.500 88A8 8 0 1 1 300 85" stroke="#fff" strokeWidth="1.600" />
                  <circle cx="280" cy="105" r="8" stroke="#fff" strokeWidth="5" />
                  <circle cx="280" cy="105" r="8" stroke="#000" strokeWidth="2" strokeDasharray="6.500 6.066" strokeDashoffset="-3" />
                  <path d="M276 94L281 97L277 101ZM291 101L288 106L284 102ZM284 116L279 113L283 109ZM269 109L272 104L276 108Z" fill="#000" />
                  <g filter="url(#soft)">
                    <path d="M366 113L460 143" stroke="#f00" strokeWidth="3" strokeLinecap="round" />
                    <path d="M343 106L371 108L367 113L367 120Z" fill="#f00" />
                  </g>
                </Overlay>
              </Figure>
              <Para>
                <TextLine $indent={32} $tall>为使您的文档具有专业外观，<Latin>Word</Latin>提供了页眉、页脚、封面和文本框设</TextLine>
                <TextLine>计，这些设计可互为补充。例如，您可以添加匹配的封面、页眉和提要栏。单</TextLine>
                <TextLine>击“插入”，然后从不同库中选择所需元素。</TextLine>
                <TextLine $indent={28}>主题和样式也有助于文档保持协调。当您单击设计并选择新的主题时，图</TextLine>
              </Para>
            </Page>
          </Pages>
        </Canvas>
        <ScrollBar>
          <ScrollButton aria-label="向上滚动"><Ico w={7} h={4}><path d="M0 4L3.500 0L7 4Z" fill={INK} /></Ico></ScrollButton>
          <ScrollGap $grow={388} />
          <Thumb />
          <ScrollGap $grow={269} />
          <ScrollButton aria-label="向下滚动"><Ico w={7} h={4}><path d="M0 0L3.500 4L7 0Z" fill={INK} /></Ico></ScrollButton>
        </ScrollBar>
      </Workspace>

      <Status>
        <span>第 3 页，共 4 页</span>
        <span>6/840 个字</span>
        <span>修订: 关闭</span>
        <span>插入</span>
        <Ico w={14} h={14}><path d="M1.500 4V12.500H12.500V2.500H7" stroke={INK} /><path d="M7 2H13V5H7Z" fill={INK} /><circle cx="3" cy="3.500" r="2.800" fill={INK} /><path d="M3 7.500H11M3 10H11" stroke={INK} strokeDasharray="2 1" /></Ico>
      </Status>

      <Banner>
        <Tag>TAG</Tag>
        <BannerText>
          <BannerName>电脑技术网</BannerName>
          <BannerUrl>www.tagxp.com</BannerUrl>
        </BannerText>
        <Stamp>
          <StampName><StampPs>ps</StampPs>爱好者</StampName>
          <StampUrl>www.psahz.com</StampUrl>
        </Stamp>
      </Banner>
    </Shell>
  );
}
